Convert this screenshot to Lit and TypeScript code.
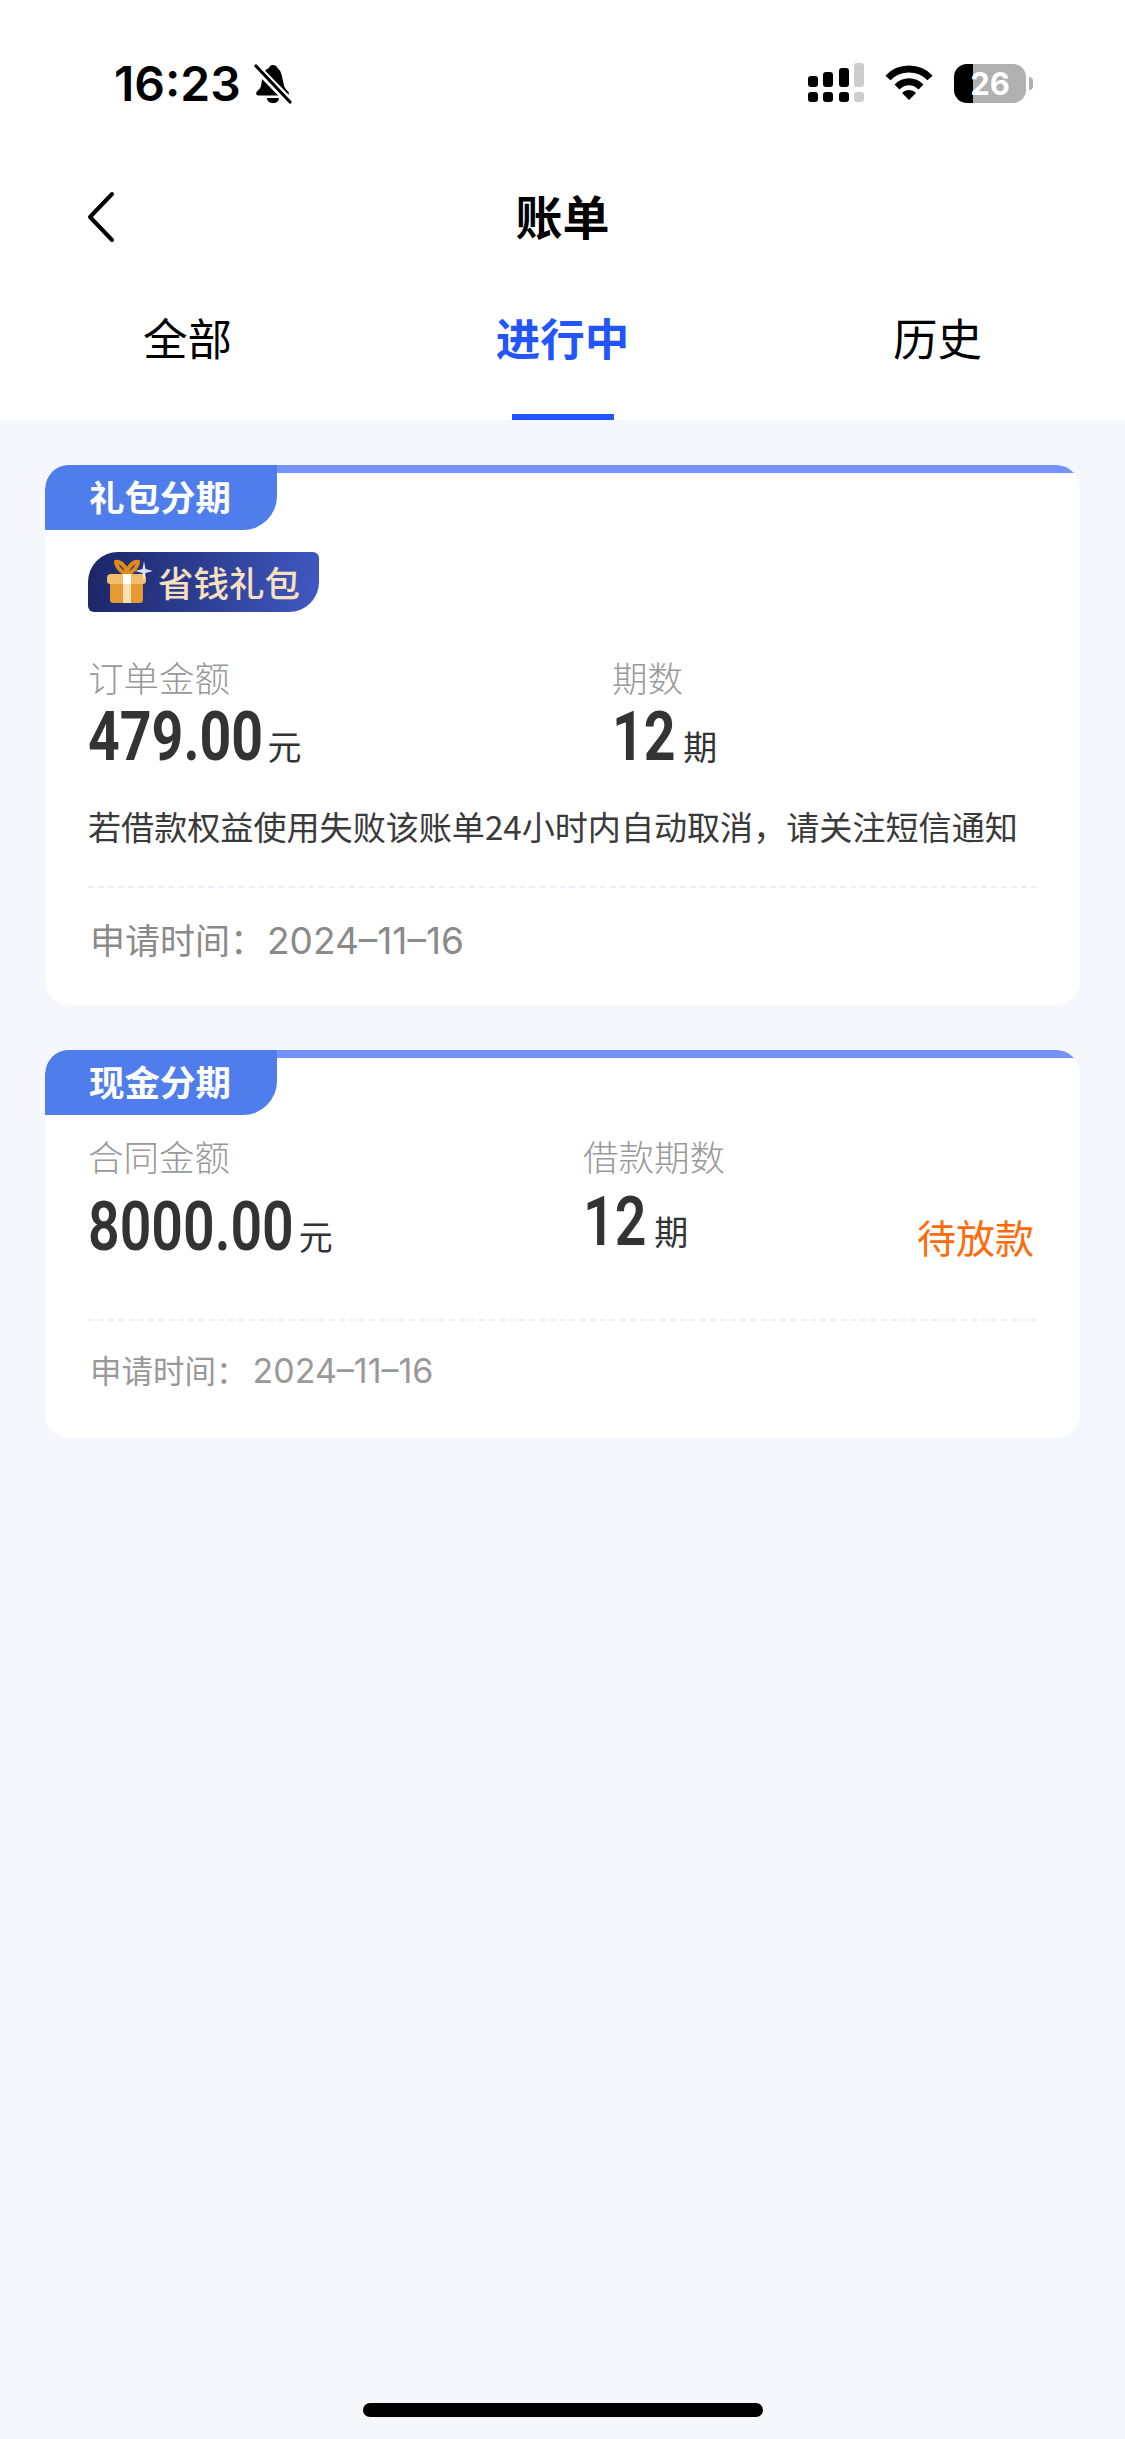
import { LitElement, html, css, svg } from "lit";
import { customElement } from "lit/decorators.js";

const bell = svg`<path d="M19 1c-2 0-3.500 1-4 3-4 1.500-6 5-6.500 9L7 22c-.5 2-2 3.500-4 5.500-1.500 1.500-1 4 1.500 4h28c2.500 0 3-2.500 1.500-4-2-2-3.500-4-4-6l-2-9c-.5-4-2.500-7-4.500-8.500C23 2 21 1 19 1z" fill="#000"/>
  <path d="M13 34h12c0 3-2.500 5-6 5s-6-2-6-5z" fill="#000"/>
  <path d="M0 1l36 37" stroke="#fff" stroke-width="8"/>
  <path d="M2 2l34 36" stroke="#000" stroke-width="3.200" stroke-linecap="round"/>`;

const gift = svg`<path d="M20 15C16 12 11 8 11 3c4-1 11 5 11 12M24 15c4-3 9-7 9-12-4-1-11 5-11 12" fill="none" stroke="#e08a1a" stroke-width="4"/>
  <path d="M5 25h33v16a3 3 0 0 1-3 3H8a3 3 0 0 1-3-3z" fill="#e59a33"/>
  <path d="M2 19a4 4 0 0 1 4-4h31a4 4 0 0 1 4 4v3a3 3 0 0 1-3 3H5a3 3 0 0 1-3-3z" fill="#f1bc6c"/>
  <path d="M18 15h8v10h-8z" fill="#fff"/>
  <path d="M18 25h8v19h-8z" fill="#f9dfb2"/>
  <path d="M39 2l1.500 8 7.500 2-7.500 2-1.500 8-1.500-8-7.500-2 7.500-2z" fill="#fff" opacity=".85"/>`;

const SCALE = 0.815;
const FONT = 68;

// Roboto has no condensed cut here, so the digits are squeezed and the box is sized to match
const numWidth = (text: string) =>
  [...text].reduce((w, c) => w + (c === "." ? 0.27 : 0.5615) * FONT * SCALE, 0);

const num = (text: string, cls = "") => html`
  <span class="num-box ${cls}" style="width:${numWidth(text)}px"><span class="num">${text}</span></span>
`;

@customElement("app-root")
export class AppRoot extends LitElement {
  static styles = css`
    :host {
      display: block;
      font-family: "Noto Sans CJK SC", "Inter", sans-serif;
    }
    .page {
      display: flex;
      flex-direction: column;
      min-height: 2439px;
      box-sizing: border-box;
      background: #f5f7fc;
    }
    .top {
      background: #fff;
    }
    .status {
      height: 168px;
      box-sizing: border-box;
      padding: 55px 92px 0 114px;
      display: flex;
      justify-content: space-between;
      align-items: flex-start;
    }
    .time {
      display: flex;
      align-items: center;
      gap: 13px;
      font-family: "Inter", sans-serif;
      font-size: 48px;
      line-height: 57px;
      font-weight: 600;
      color: #000;
    }
    .sys {
      display: flex;
      align-items: center;
      gap: 21px;
      margin-top: 8px;
    }
    .batt {
      display: flex;
      align-items: center;
      gap: 3px;
    }
    .cell {
      width: 72px;
      height: 39px;
      border-radius: 13px;
      background: linear-gradient(90deg, #000 26%, #b0b0b0 26%);
      color: #fff;
      font-family: "Inter", sans-serif;
      font-size: 31px;
      line-height: 39px;
      font-weight: 700;
      text-align: center;
    }
    .tail {
      width: 4px;
      height: 13px;
      background: #b0b0b0;
      border-radius: 0 4px 4px 0;
    }
    .nav {
      height: 92px;
      display: flex;
      align-items: center;
      justify-content: center;
      position: relative;
    }
    .back {
      position: absolute;
      left: 85px;
      top: 23px;
    }
    .title {
      font-size: 47px;
      font-weight: 600;
      color: #000;
    }
    .tabs {
      display: grid;
      grid-template-columns: repeat(3, 1fr);
      height: 160px;
    }
    .tab {
      display: flex;
      flex-direction: column;
      align-items: center;
      justify-content: space-between;
      font-size: 44.500px;
      line-height: 60px;
      padding-top: 47px;
      box-sizing: border-box;
      color: #000;
    }
    .tab.on {
      color: #2255fb;
      font-weight: 600;
    }
    .bar {
      width: 102px;
      height: 6px;
      background: #2255fb;
    }
    .list {
      display: flex;
      flex-direction: column;
      gap: 45px;
      padding: 45px 45px 0;
    }
    .card {
      background: #fff;
      border-radius: 24px;
      overflow: hidden;
      position: relative;
    }
    .strip {
      height: 8px;
      background: #7492fb;
    }
    .tag {
      position: absolute;
      left: 0;
      top: 0;
      width: 232px;
      height: 65px;
      background: #4f7deb;
      border-radius: 24px 0 34px 0;
      box-sizing: border-box;
      padding-left: 44px;
      color: #fff;
      font-size: 35.500px;
      font-weight: 600;
      line-height: 62px;
    }
    .body {
      padding: 0 43px;
    }
    .gift-row {
      padding-top: 79px;
    }
    .badge {
      display: flex;
      align-items: center;
      width: 231px;
      height: 60px;
      box-sizing: border-box;
      padding-left: 17px;
      gap: 5px;
      border-radius: 30px 6px 30px 6px;
      background: linear-gradient(100deg, #1b2566, #4059c2);
      color: #f8e0bd;
      font-size: 35.500px;
      font-weight: 500;
      line-height: 60px;
      white-space: nowrap;
    }
    .cols {
      display: grid;
      align-items: start;
    }
    .cols.first {
      grid-template-columns: 524px 1fr;
      padding-top: 42px;
    }
    .cols.second {
      grid-template-columns: 495px 1fr auto;
      padding-top: 75px;
    }
    .label {
      font-size: 35.500px;
      line-height: 46px;
      font-weight: 300;
      color: #999;
    }
    .value {
      display: flex;
      align-items: baseline;
      gap: 9px;
      color: #333;
      font-size: 34px;
      line-height: 72px;
      margin-top: 1px;
    }
    .value.low {
      margin-top: 12px;
    }
    .value.mid {
      margin-top: 7px;
    }
    .num-box {
      display: inline-block;
      white-space: nowrap;
    }
    .num {
      display: inline-block;
      font-family: "Roboto", sans-serif;
      font-size: 68px;
      line-height: 72px;
      font-weight: 700;
      transform: scaleX(0.815);
      transform-origin: left center;
    }
    .num-box.thin .num {
      font-weight: 600;
    }
    .note {
      margin-top: 20px;
      font-size: 33.100px;
      line-height: 48px;
      color: #3a3a3a;
      white-space: nowrap;
    }
    .rule {
      border-top: 2px dashed #eeeff6;
    }
    .first-rule {
      margin-top: 36px;
    }
    .second-rule {
      margin-top: 47px;
    }
    .status-text {
      align-self: end;
      color: #ff6a0a;
      font-size: 39px;
      line-height: 50px;
      margin: 0 3px 11px 0;
    }
    .date {
      color: #8a8a8a;
      font-size: 35px;
      line-height: 50px;
      padding: 26px 2px 0;
      height: 117px;
      box-sizing: border-box;
    }
    .date.small {
      color: #999;
      font-size: 31.500px;
      padding-top: 23px;
    }
    .date span {
      font-family: "Inter", sans-serif;
      font-size: 37px;
      margin-left: 2px;
    }
    .date.small span {
      font-size: 34px;
      margin-left: 5px;
    }
    .home {
      margin: auto 0 22px;
      align-self: center;
      width: 400px;
      height: 14px;
      border-radius: 7px;
      background: #000;
    }
  `;

  render() {
    return html`
      <div class="page">
        <div class="top">
          <div class="status">
            <div class="time">
              16:23
              <svg width="38" height="40" viewBox="0 0 38 40">${bell}</svg>
            </div>
            <div class="sys">
              <svg width="56" height="40" viewBox="0 0 56 40">
                <g fill="#000">
                  <rect x="0" y="13" width="10" height="11" rx="3" />
                  <rect x="15" y="9" width="10" height="15" rx="3" />
                  <rect x="31" y="5" width="10" height="19" rx="3" />
                  <rect x="0" y="29" width="10" height="10" rx="3" />
                  <rect x="15" y="29" width="10" height="10" rx="3" />
                  <rect x="31" y="29" width="10" height="10" rx="3" />
                </g>
                <g fill="#ccc">
                  <rect x="46" y="0" width="10" height="24" rx="3" />
                  <rect x="46" y="29" width="10" height="10" rx="3" />
                </g>
              </svg>
              <svg width="48" height="36" viewBox="0 0 48 36">
                <path d="M3 13C14 1 34 1 45 13" fill="none" stroke="#000" stroke-width="7" />
                <path d="M12 22c7-7 17-7 24 0" fill="none" stroke="#000" stroke-width="7" />
                <path d="M17 28c4-4 10-4 14 0l-7 7z" fill="#000" />
              </svg>
              <div class="batt"><div class="cell">26</div><div class="tail"></div></div>
            </div>
          </div>
          <div class="nav">
            <svg class="back" width="32" height="52" viewBox="0 0 32 52">
              <path d="M27 3L5 26l22 23" fill="none" stroke="#000" stroke-width="4" stroke-linecap="round" stroke-linejoin="round" />
            </svg>
            <div class="title">账单</div>
          </div>
          <div class="tabs">
            <div class="tab">全部</div>
            <div class="tab on">进行中<div class="bar"></div></div>
            <div class="tab">历史</div>
          </div>
        </div>
        <div class="list">
          <div class="card">
            <div class="strip"></div>
            <div class="tag">礼包分期</div>
            <div class="body">
              <div class="gift-row">
                <div class="badge">
                  <svg width="48" height="46" viewBox="0 0 48 46">${gift}</svg>
                  省钱礼包
                </div>
              </div>
              <div class="cols first">
                <div>
                  <div class="label">订单金额</div>
                  <div class="value">${num("479.00")}元</div>
                </div>
                <div>
                  <div class="label">期数</div>
                  <div class="value">${num("12")}期</div>
                </div>
              </div>
              <div class="note">若借款权益使用失败该账单24小时内自动取消，请关注短信通知</div>
              <div class="rule first-rule"></div>
              <div class="date">申请时间：<span>2024–11–16</span></div>
            </div>
          </div>
          <div class="card">
            <div class="strip"></div>
            <div class="tag">现金分期</div>
            <div class="body">
              <div class="cols second">
                <div>
                  <div class="label">合同金额</div>
                  <div class="value low">${num("8000.00", "thin")}元</div>
                </div>
                <div>
                  <div class="label">借款期数</div>
                  <div class="value mid">${num("12", "thin")}期</div>
                </div>
                <div class="status-text">待放款</div>
              </div>
              <div class="rule second-rule"></div>
              <div class="date small">申请时间：<span>2024–11–16</span></div>
            </div>
          </div>
        </div>
        <div class="home"></div>
      </div>
    `;
  }
}
